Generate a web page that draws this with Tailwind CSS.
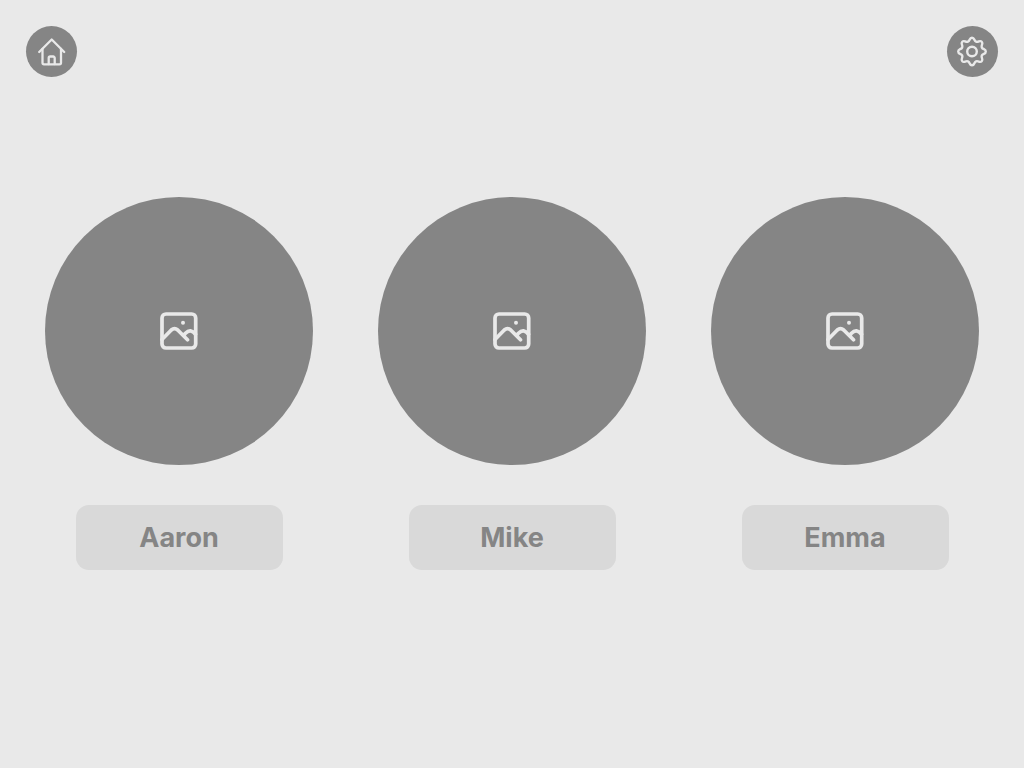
<!DOCTYPE html>
<html lang="en">
<head>
  <meta charset="UTF-8" />
  <meta name="viewport" content="width=device-width, initial-scale=1.0" />
  <title>Choose a profile</title>
  <script src="https://cdn.jsdelivr.net/npm/@tailwindcss/browser@4"></script>
</head>
<body class="min-h-screen bg-[#e9e9e9] font-['Inter',sans-serif] text-[#858585]">
  <header class="flex items-center justify-between p-[26px]">
    <a href="#" aria-label="Home" class="block size-[51px] rounded-full bg-[#858585] text-[#e9e9e9]">
      <svg class="size-full" viewBox="0 0 51 51" fill="none" stroke="currentColor" stroke-width="2.3" stroke-linecap="round" stroke-linejoin="round">
        <path d="M13.2 26 25.7 13.5 38.2 26" />
        <path d="M16.5 23V36.8a1.5 1.5 0 0 0 1.5 1.5h15.500a1.500 1.500 0 0 0 1.500-1.500V23" />
        <path d="M22.700 38v-6a1.500 1.500 0 0 1 1.500-1.500h3a1.500 1.500 0 0 1 1.500 1.500v6" />
      </svg>
    </a>
    <button type="button" aria-label="Settings" class="block size-[51px] rounded-full bg-[#858585] text-[#e9e9e9]">
      <svg class="size-full" viewBox="-25 -25.5 51 51" fill="none" stroke="currentColor" stroke-width="2.4" stroke-linejoin="round">
        <path d="M0-13.8C2.8-13.8 1.66-10.79 4.06-9.79S7.78-11.74 9.76-9.76 8.79-6.46 9.79-4.06 13.8-2.8 13.8 0 10.79 1.66 9.79 4.06 11.74 7.78 9.76 9.76 6.46 8.79 4.06 9.79 2.8 13.8 0 13.8-1.66 10.79-4.06 9.79-7.78 11.74-9.76 9.76-8.79 6.46-9.79 4.06-13.8 2.8-13.8 0-10.79-1.66-9.79-4.06-11.74-7.78-9.76-9.76-6.46-8.79-4.06-9.79-2.8-13.8 0-13.8Z" />
        <circle r="4.8" />
      </svg>
    </button>
  </header>

  <main class="grid grid-cols-3 gap-[65px] px-[45px] pt-[94px]">
    <section class="flex flex-col items-center gap-10">
      <div class="flex aspect-square w-full items-center justify-center rounded-full bg-[#858585] text-[#e9e9e9]">
        <svg class="size-[38px]" viewBox="0 0 38 38" fill="none" stroke="currentColor" stroke-width="3.7" stroke-linecap="round" stroke-linejoin="round">
          <rect x="2" y="2" width="33.700" height="34" rx="4" />
          <path d="M2 27.500l9.300-9.500q3.200-2.700 6.400 0l9.800 9.700M23.700 23.500l1.800-2.300q5-5 10 1" />
          <circle cx="23" cy="10.700" r="2" fill="currentColor" stroke="none" />
        </svg>
      </div>
      <button type="button" class="h-[65px] w-[207px] max-w-full rounded-[13px] bg-[#d9d9d9] pt-0.5 text-[27px] font-bold">Aaron</button>
    </section>

    <section class="flex flex-col items-center gap-10">
      <div class="flex aspect-square w-full items-center justify-center rounded-full bg-[#858585] text-[#e9e9e9]">
        <svg class="size-[38px]" viewBox="0 0 38 38" fill="none" stroke="currentColor" stroke-width="3.7" stroke-linecap="round" stroke-linejoin="round">
          <rect x="2" y="2" width="33.700" height="34" rx="4" />
          <path d="M2 27.500l9.300-9.500q3.200-2.700 6.400 0l9.800 9.700M23.700 23.500l1.800-2.300q5-5 10 1" />
          <circle cx="23" cy="10.700" r="2" fill="currentColor" stroke="none" />
        </svg>
      </div>
      <button type="button" class="h-[65px] w-[207px] max-w-full rounded-[13px] bg-[#d9d9d9] pt-0.5 text-[27px] font-bold">Mike</button>
    </section>

    <section class="flex flex-col items-center gap-10">
      <div class="flex aspect-square w-full items-center justify-center rounded-full bg-[#858585] text-[#e9e9e9]">
        <svg class="size-[38px]" viewBox="0 0 38 38" fill="none" stroke="currentColor" stroke-width="3.7" stroke-linecap="round" stroke-linejoin="round">
          <rect x="2" y="2" width="33.700" height="34" rx="4" />
          <path d="M2 27.500l9.300-9.500q3.200-2.700 6.400 0l9.800 9.700M23.700 23.500l1.800-2.300q5-5 10 1" />
          <circle cx="23" cy="10.700" r="2" fill="currentColor" stroke="none" />
        </svg>
      </div>
      <button type="button" class="h-[65px] w-[207px] max-w-full rounded-[13px] bg-[#d9d9d9] pt-0.5 text-[27px] font-bold">Emma</button>
    </section>
  </main>
</body>
</html>
